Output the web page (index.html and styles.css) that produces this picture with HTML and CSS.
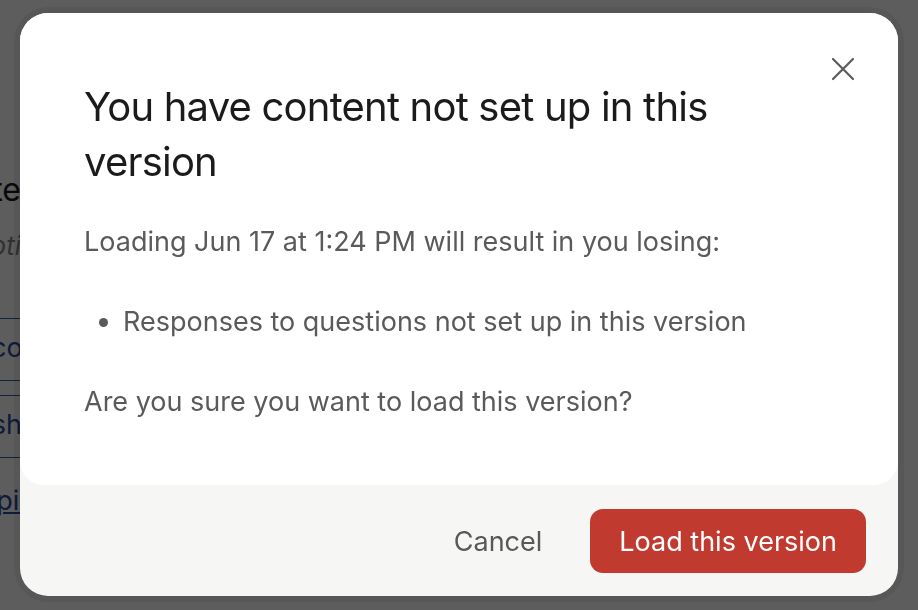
FILE: index.html
```html
<!DOCTYPE html>
<html lang="en">
<head>
    <meta charset="UTF-8">
    <meta name="viewport" content="width=device-width, initial-scale=1.0">
    <title>Load version</title>
    <link rel="stylesheet" href="styles.css">
</head>
<body>

    <!-- Page behind the dialog -->
    <div class="page">
        <h2 class="page-title">Quote</h2>
        <p class="page-note">Emotion</p>
        <ul class="page-links">
            <li class="link-a"><a href="#">Welcome</a></li>
            <li class="link-b"><a href="#">Membership</a></li>
        </ul>
        <a href="#" class="page-more">Topics</a>
    </div>

    <!-- Dialog -->
    <div class="overlay">
        <div class="modal" role="dialog" aria-labelledby="modalTitle">
            <button class="close" aria-label="Close">
                <svg width="24" height="24" viewBox="0 0 24 24" fill="none" stroke="#5b5b5b" stroke-width="2.2" stroke-linecap="round">
                    <path d="M2 2 L22 22 M22 2 L2 22"/>
                </svg>
            </button>
            <div class="modal-body">
                <h1 id="modalTitle">You have content not set up in this version</h1>
                <p>Loading Jun 17 at 1:24 PM will result in you losing:</p>
                <ul>
                    <li>Responses to questions not set up in this version</li>
                </ul>
                <p>Are you sure you want to load this version?</p>
            </div>
            <div class="modal-footer">
                <button class="btn-cancel">Cancel</button>
                <button class="btn-load">Load this version</button>
            </div>
        </div>
    </div>

</body>
</html>
```

FILE: styles.css
```css
body {
    margin: 0;
    font-family: 'Inter', 'Noto Sans', sans-serif;
    background: #fff;
    height: 610px;
    overflow: hidden;
}

/* pagina de fundo (atras do dialogo) */
.page {
    width: 300px;
    margin-left: -279px;
    padding-top: 168px;
    text-align: right;
    white-space: nowrap;
}

.page-title {
    margin: 0;
    font-size: 32px;
    font-weight: 400;
    line-height: 44px;
    color: #1a1a1a;
}

.page-note {
    margin: 14px -31px 0 0;
    font-size: 26px;
    line-height: 40px;
    font-style: italic;
    color: #888;
}

.page-links {
    list-style: none;
    margin: 52px 0 0;
    padding: 0;
}

.page-links li {
    border-top: 1px solid #3b5ba8;
    border-bottom: 1px solid #3b5ba8;
    margin-bottom: 14px;
    line-height: 57px;
}

.link-a a {
    margin-right: -41px;
}

.link-b a {
    margin-right: -24px;
}

.page-links a,
.page-more {
    display: inline-block;
    color: #2a4a9a;
    font-size: 27px;
    text-decoration: none;
}

.page-more {
    margin: 12px -28px 0 0;
    text-decoration: underline;
}

/* overlay escuro */
.overlay {
    position: fixed;
    inset: 0;
    background: rgba(0, 0, 0, 0.635);
    padding: 13px 20px 14px 20px;
}

.modal {
    position: relative;
    height: 583px;
    box-sizing: border-box;
    background: #f6f6f4;
    border-radius: 28px;
    box-shadow: 0 0 0 6px rgba(0, 0, 0, 0.07);
    display: flex;
    flex-direction: column;
    overflow: hidden;
}

.close {
    position: absolute;
    top: 44px;
    right: 43px;
    width: 24px;
    height: 24px;
    padding: 0;
    border: none;
    background: none;
    cursor: pointer;
}

.modal-body {
    background: #fff;
    border-radius: 0 0 24px 24px;
    padding: 66px 64px 0 64px;
    height: 472px;
    box-sizing: border-box;
    color: #5a5a5a;
}

.modal-body h1 {
    margin: 0 0 35px;
    max-width: 700px;
    font-size: 40px;
    font-weight: 400;
    line-height: 55px;
    color: #1b1b1b;
    letter-spacing: -0.8px;
}

.modal-body p {
    margin: 0 0 44px;
    font-size: 27px;
    line-height: 36px;
}

.modal-body ul {
    margin: 0 0 44px;
    padding-left: 39px;
    font-size: 27px;
    line-height: 36px;
}

.modal-footer {
    flex: 1;
    display: flex;
    justify-content: flex-end;
    align-items: center;
    gap: 24px;
    padding: 1px 32px 0 0;
}

.btn-cancel {
    font-family: inherit;
    font-size: 27px;
    color: #585858;
    background: none;
    border: none;
    padding: 16px 24px;
    cursor: pointer;
}

.btn-load {
    font-family: inherit;
    font-size: 27px;
    color: #fff;
    background: #c13a30;
    border: none;
    border-radius: 13px;
    height: 64px;
    padding: 0 29px;
    cursor: pointer;
}
```
